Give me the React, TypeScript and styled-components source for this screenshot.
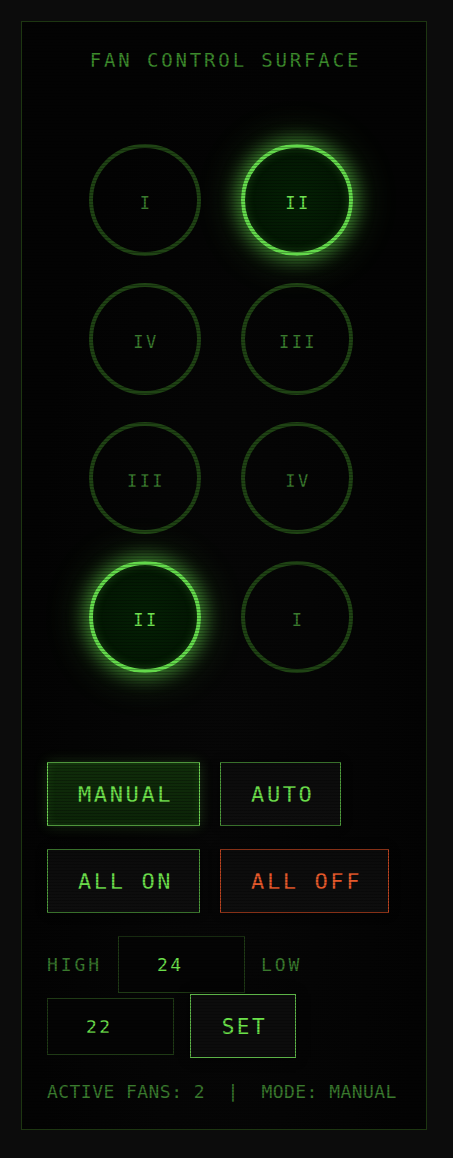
import React, { useState } from "react";
import styled, { createGlobalStyle, css } from "styled-components";

const GlobalStyle = createGlobalStyle`
  html, body {
    margin: 0;
    padding: 0;
    background: #0c0c0c;
  }
  * { box-sizing: border-box; }
`;

const MONO = `"DejaVu Sans Mono", "Liberation Mono", monospace`;

const Page = styled.div`
  padding: 21px;
  min-height: 1158px;
  background: #0c0c0c;
`;

const Panel = styled.section`
  position: relative;
  width: 406px;
  height: 1109px;
  border: 1px solid #1d3611;
  background: radial-gradient(ellipse at 50% 70%, #070707 0%, #030303 70%);
  padding: 28px 25px 27px;
  display: flex;
  flex-direction: column;
  font-family: ${MONO};

  &::after {
    content: "";
    position: absolute;
    inset: 0;
    pointer-events: none;
    background: repeating-linear-gradient(
      to bottom,
      rgba(0, 0, 0, 0) 0px,
      rgba(0, 0, 0, 0) 2px,
      rgba(0, 0, 0, 0.28) 2px,
      rgba(0, 0, 0, 0.28) 3px
    );
  }
`;

const Title = styled.h1`
  margin: 0;
  font-family: ${MONO};
  font-weight: 400;
  font-size: 19px;
  line-height: 20px;
  letter-spacing: 2.85px;
  text-align: center;
  color: #3c8a2c;
  padding-left: 3px;
`;

const FanGrid = styled.div`
  margin-top: 74px;
  margin-left: 42px;
  display: grid;
  grid-template-columns: repeat(2, 112px);
  column-gap: 40px;
  row-gap: 27px;
`;

const Fan = styled.button<{ $on: boolean }>`
  width: 112px;
  height: 112px;
  border-radius: 50%;
  padding: 5px 0 0 2px;
  display: flex;
  align-items: center;
  justify-content: center;
  font-family: ${MONO};
  font-size: 17px;
  letter-spacing: 2.4px;
  cursor: pointer;
  ${({ $on }) =>
    $on
      ? css`
          border: 4px solid #63d94b;
          background: radial-gradient(circle, #042004 0%, #031703 70%, #052a05 100%);
          color: #6fe04f;
          box-shadow: 0 0 16px 5px rgba(99, 217, 75, 0.5),
            0 0 36px 10px rgba(99, 217, 75, 0.2),
            inset 0 0 10px rgba(99, 217, 75, 0.25);
        `
      : css`
          border: 4px solid #1f4314;
          background: transparent;
          color: #3a7a2e;
        `}
`;

const ButtonRows = styled.div`
  margin-top: 89px;
  display: flex;
  flex-direction: column;
  gap: 23px;
`;

const ButtonRow = styled.div`
  display: flex;
  gap: 20px;
`;

type Tone = "active" | "idle" | "danger";

const toneStyles: Record<Tone, ReturnType<typeof css>> = {
  active: css`
    border-color: #6ccf52;
    color: #6fe04c;
    background: linear-gradient(to bottom, #102d0a, #0c2408);
    box-shadow: 0 0 12px rgba(100, 210, 70, 0.22), inset 0 0 10px rgba(100, 210, 70, 0.12);
  `,
  idle: css`
    border-color: #4d9a3b;
    color: #6bdc4b;
    background: linear-gradient(to bottom, #0b0b0b, #0e0e0e);
    box-shadow: 0 0 8px rgba(0, 0, 0, 0.6);
  `,
  danger: css`
    border-color: #b8421f;
    color: #e4592b;
    background: linear-gradient(to bottom, #0b0b0b, #0e0e0e);
    box-shadow: 0 0 8px rgba(0, 0, 0, 0.6);
  `,
};

const PanelButton = styled.button<{ $tone: Tone }>`
  height: 64px;
  padding: 2px 26px 0 30px;
  border: 1px solid;
  font-family: ${MONO};
  font-size: 22px;
  line-height: 24px;
  letter-spacing: 2.6px;
  cursor: pointer;
  ${({ $tone }) => toneStyles[$tone]}
`;

const Controls = styled.div`
  margin-top: 23px;
  display: flex;
  flex-wrap: wrap;
  align-items: center;
  column-gap: 16px;
  row-gap: 1px;
`;

const FieldLabel = styled.label`
  font-family: ${MONO};
  font-size: 18px;
  letter-spacing: 2.9px;
  color: #3a7a2e;
`;

const NumberField = styled.input`
  width: 127px;
  height: 57px;
  padding: 0 0 0 38px;
  border: 1px solid #1f3a15;
  background: #040404;
  color: #6bde4b;
  font-family: ${MONO};
  font-size: 18px;
  letter-spacing: 2.5px;
  outline: none;
`;

const SetButton = styled.button`
  width: 106px;
  height: 64px;
  padding: 2px 0 0 3px;
  border: 1px solid #5cb247;
  background: #0c0c0c;
  color: #6be04a;
  font-family: ${MONO};
  font-size: 21px;
  letter-spacing: 2.6px;
  box-shadow: 0 0 10px rgba(0, 0, 0, 0.7);
  cursor: pointer;
`;

const Status = styled.p`
  margin: 24px 0 0;
  font-family: ${MONO};
  font-size: 18px;
  line-height: 20px;
  letter-spacing: 0.45px;
  color: #3a7a2e;
  white-space: pre;
`;

const fans = [
  { label: "I", on: false },
  { label: "II", on: true },
  { label: "IV", on: false },
  { label: "III", on: false },
  { label: "III", on: false },
  { label: "IV", on: false },
  { label: "II", on: true },
  { label: "I", on: false },
];

export default function App() {
  const [mode, setMode] = useState<"MANUAL" | "AUTO">("MANUAL");
  const active = fans.filter((f) => f.on).length;

  return (
    <>
      <GlobalStyle />
      <Page>
        <Panel>
          <Title>FAN CONTROL SURFACE</Title>

          <FanGrid>
            {fans.map((f, i) => (
              <Fan key={i} $on={f.on}>
                {f.label}
              </Fan>
            ))}
          </FanGrid>

          <ButtonRows>
            <ButtonRow>
              <PanelButton
                $tone={mode === "MANUAL" ? "active" : "idle"}
                onClick={() => setMode("MANUAL")}
              >
                MANUAL
              </PanelButton>
              <PanelButton
                $tone={mode === "AUTO" ? "active" : "idle"}
                onClick={() => setMode("AUTO")}
              >
                AUTO
              </PanelButton>
            </ButtonRow>
            <ButtonRow>
              <PanelButton $tone="idle">ALL ON</PanelButton>
              <PanelButton $tone="danger">ALL OFF</PanelButton>
            </ButtonRow>
          </ButtonRows>

          <Controls>
            <FieldLabel htmlFor="high">HIGH</FieldLabel>
            <NumberField id="high" defaultValue="24" />
            <FieldLabel htmlFor="low">LOW</FieldLabel>
            <NumberField id="low" defaultValue="22" />
            <SetButton>SET</SetButton>
          </Controls>

          <Status>{`ACTIVE FANS: ${active}  |  MODE: ${mode}`}</Status>
        </Panel>
      </Page>
    </>
  );
}
